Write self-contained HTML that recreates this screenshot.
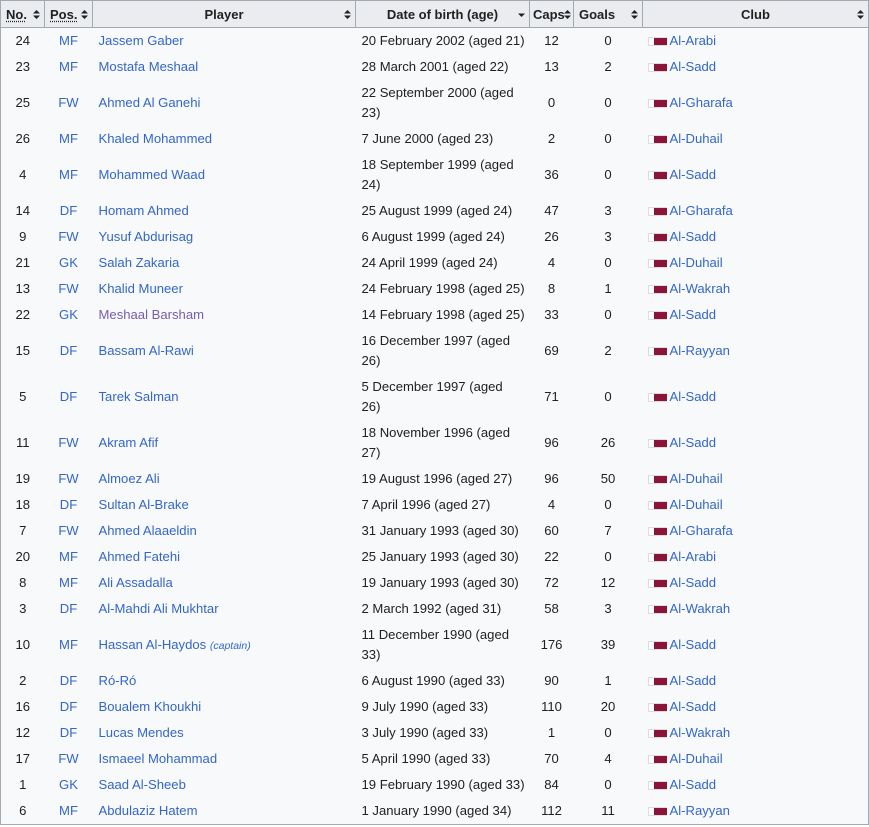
<!DOCTYPE html>
<html><head><meta charset="utf-8"><style>
body{margin:0;background:#fff;font-family:"Liberation Sans",Arial,sans-serif;font-size:13.1px;color:#202122}
table{border-collapse:collapse;table-layout:fixed;width:869px;background:#f8f9fa;border-left:1px solid #a2a9b1;border-bottom:1px solid #a2a9b1;border-right:1px solid #a2a9b1}
th{background:#eaecf0;border:1px solid #a2a9b1;height:26px;padding:0 4px;font-weight:bold;position:relative;text-align:center;white-space:nowrap;font-size:13px}
th svg{position:absolute;right:4px;top:9px}
td{padding:3px 6px;line-height:20px;height:20px;vertical-align:middle;white-space:nowrap;overflow:hidden}
td.c{text-align:center;padding:3px 2px}
a{color:#3366cc;text-decoration:none}
a.v{color:#795cb2}
abbr{text-decoration:underline dotted;text-underline-offset:2px}
.f{display:inline-block;width:19px;height:9px;vertical-align:-1px;margin-right:3px;box-sizing:border-box;border:1px solid #dcdcdc;border-right:0;background:linear-gradient(90deg,#fff 0 5px,#8a1538 5px)}
td.cl{padding-left:5px}
small{font-size:10.5px;font-style:italic;color:#3366cc}
</style></head><body>
<table>
<colgroup><col style="width:44px"><col style="width:48px"><col style="width:263px"><col style="width:174px"><col style="width:44px"><col style="width:69px"><col></colgroup>
<tr><th style="text-align:left;padding-left:5px"><abbr>No.</abbr><svg width="7" height="9"><path d="M0 3.5L3.5 0 7 3.5zM0 5.5L3.5 9 7 5.5z" fill="#202122"/></svg></th><th style="text-align:left;padding-left:5px"><abbr>Pos.</abbr><svg width="7" height="9"><path d="M0 3.5L3.5 0 7 3.5zM0 5.5L3.5 9 7 5.5z" fill="#202122"/></svg></th><th>Player<svg width="7" height="9"><path d="M0 3.5L3.5 0 7 3.5zM0 5.5L3.5 9 7 5.5z" fill="#202122"/></svg></th><th>Date of birth (age)<svg width="7" height="9"><path d="M0 3.5L3.5 7 7 3.5z" fill="#202122"/></svg></th><th style="text-align:left;padding-left:3px">Caps<svg width="7" height="9" style="right:2px"><path d="M0 3.5L3.5 0 7 3.5zM0 5.5L3.5 9 7 5.5z" fill="#202122"/></svg></th><th style="text-align:left;padding-left:5px">Goals<svg width="7" height="9"><path d="M0 3.5L3.5 0 7 3.5zM0 5.5L3.5 9 7 5.5z" fill="#202122"/></svg></th><th>Club<svg width="7" height="9"><path d="M0 3.5L3.5 0 7 3.5zM0 5.5L3.5 9 7 5.5z" fill="#202122"/></svg></th></tr>
<tr><td class="c">24</td><td class="c"><a>MF</a></td><td><a>Jassem Gaber</a></td><td>20 February 2002 (aged 21)</td><td class="c">12</td><td class="c">0</td><td class="cl"><span class="f"></span><a>Al-Arabi</a></td></tr>
<tr><td class="c">23</td><td class="c"><a>MF</a></td><td><a>Mostafa Meshaal</a></td><td>28 March 2001 (aged 22)</td><td class="c">13</td><td class="c">2</td><td class="cl"><span class="f"></span><a>Al-Sadd</a></td></tr>
<tr><td class="c">25</td><td class="c"><a>FW</a></td><td><a>Ahmed Al Ganehi</a></td><td>22 September 2000 (aged<br>23)</td><td class="c">0</td><td class="c">0</td><td class="cl"><span class="f"></span><a>Al-Gharafa</a></td></tr>
<tr><td class="c">26</td><td class="c"><a>MF</a></td><td><a>Khaled Mohammed</a></td><td>7 June 2000 (aged 23)</td><td class="c">2</td><td class="c">0</td><td class="cl"><span class="f"></span><a>Al-Duhail</a></td></tr>
<tr><td class="c">4</td><td class="c"><a>MF</a></td><td><a>Mohammed Waad</a></td><td>18 September 1999 (aged<br>24)</td><td class="c">36</td><td class="c">0</td><td class="cl"><span class="f"></span><a>Al-Sadd</a></td></tr>
<tr><td class="c">14</td><td class="c"><a>DF</a></td><td><a>Homam Ahmed</a></td><td>25 August 1999 (aged 24)</td><td class="c">47</td><td class="c">3</td><td class="cl"><span class="f"></span><a>Al-Gharafa</a></td></tr>
<tr><td class="c">9</td><td class="c"><a>FW</a></td><td><a>Yusuf Abdurisag</a></td><td>6 August 1999 (aged 24)</td><td class="c">26</td><td class="c">3</td><td class="cl"><span class="f"></span><a>Al-Sadd</a></td></tr>
<tr><td class="c">21</td><td class="c"><a>GK</a></td><td><a>Salah Zakaria</a></td><td>24 April 1999 (aged 24)</td><td class="c">4</td><td class="c">0</td><td class="cl"><span class="f"></span><a>Al-Duhail</a></td></tr>
<tr><td class="c">13</td><td class="c"><a>FW</a></td><td><a>Khalid Muneer</a></td><td>24 February 1998 (aged 25)</td><td class="c">8</td><td class="c">1</td><td class="cl"><span class="f"></span><a>Al-Wakrah</a></td></tr>
<tr><td class="c">22</td><td class="c"><a>GK</a></td><td><a class="v">Meshaal Barsham</a></td><td>14 February 1998 (aged 25)</td><td class="c">33</td><td class="c">0</td><td class="cl"><span class="f"></span><a>Al-Sadd</a></td></tr>
<tr><td class="c">15</td><td class="c"><a>DF</a></td><td><a>Bassam Al-Rawi</a></td><td>16 December 1997 (aged<br>26)</td><td class="c">69</td><td class="c">2</td><td class="cl"><span class="f"></span><a>Al-Rayyan</a></td></tr>
<tr><td class="c">5</td><td class="c"><a>DF</a></td><td><a>Tarek Salman</a></td><td>5 December 1997 (aged<br>26)</td><td class="c">71</td><td class="c">0</td><td class="cl"><span class="f"></span><a>Al-Sadd</a></td></tr>
<tr><td class="c">11</td><td class="c"><a>FW</a></td><td><a>Akram Afif</a></td><td>18 November 1996 (aged<br>27)</td><td class="c">96</td><td class="c">26</td><td class="cl"><span class="f"></span><a>Al-Sadd</a></td></tr>
<tr><td class="c">19</td><td class="c"><a>FW</a></td><td><a>Almoez Ali</a></td><td>19 August 1996 (aged 27)</td><td class="c">96</td><td class="c">50</td><td class="cl"><span class="f"></span><a>Al-Duhail</a></td></tr>
<tr><td class="c">18</td><td class="c"><a>DF</a></td><td><a>Sultan Al-Brake</a></td><td>7 April 1996 (aged 27)</td><td class="c">4</td><td class="c">0</td><td class="cl"><span class="f"></span><a>Al-Duhail</a></td></tr>
<tr><td class="c">7</td><td class="c"><a>FW</a></td><td><a>Ahmed Alaaeldin</a></td><td>31 January 1993 (aged 30)</td><td class="c">60</td><td class="c">7</td><td class="cl"><span class="f"></span><a>Al-Gharafa</a></td></tr>
<tr><td class="c">20</td><td class="c"><a>MF</a></td><td><a>Ahmed Fatehi</a></td><td>25 January 1993 (aged 30)</td><td class="c">22</td><td class="c">0</td><td class="cl"><span class="f"></span><a>Al-Arabi</a></td></tr>
<tr><td class="c">8</td><td class="c"><a>MF</a></td><td><a>Ali Assadalla</a></td><td>19 January 1993 (aged 30)</td><td class="c">72</td><td class="c">12</td><td class="cl"><span class="f"></span><a>Al-Sadd</a></td></tr>
<tr><td class="c">3</td><td class="c"><a>DF</a></td><td><a>Al-Mahdi Ali Mukhtar</a></td><td>2 March 1992 (aged 31)</td><td class="c">58</td><td class="c">3</td><td class="cl"><span class="f"></span><a>Al-Wakrah</a></td></tr>
<tr><td class="c">10</td><td class="c"><a>MF</a></td><td><a>Hassan Al-Haydos</a> <small>(captain)</small></td><td>11 December 1990 (aged<br>33)</td><td class="c">176</td><td class="c">39</td><td class="cl"><span class="f"></span><a>Al-Sadd</a></td></tr>
<tr><td class="c">2</td><td class="c"><a>DF</a></td><td><a>Ró-Ró</a></td><td>6 August 1990 (aged 33)</td><td class="c">90</td><td class="c">1</td><td class="cl"><span class="f"></span><a>Al-Sadd</a></td></tr>
<tr><td class="c">16</td><td class="c"><a>DF</a></td><td><a>Boualem Khoukhi</a></td><td>9 July 1990 (aged 33)</td><td class="c">110</td><td class="c">20</td><td class="cl"><span class="f"></span><a>Al-Sadd</a></td></tr>
<tr><td class="c">12</td><td class="c"><a>DF</a></td><td><a>Lucas Mendes</a></td><td>3 July 1990 (aged 33)</td><td class="c">1</td><td class="c">0</td><td class="cl"><span class="f"></span><a>Al-Wakrah</a></td></tr>
<tr><td class="c">17</td><td class="c"><a>FW</a></td><td><a>Ismaeel Mohammad</a></td><td>5 April 1990 (aged 33)</td><td class="c">70</td><td class="c">4</td><td class="cl"><span class="f"></span><a>Al-Duhail</a></td></tr>
<tr><td class="c">1</td><td class="c"><a>GK</a></td><td><a>Saad Al-Sheeb</a></td><td>19 February 1990 (aged 33)</td><td class="c">84</td><td class="c">0</td><td class="cl"><span class="f"></span><a>Al-Sadd</a></td></tr>
<tr><td class="c">6</td><td class="c"><a>MF</a></td><td><a>Abdulaziz Hatem</a></td><td>1 January 1990 (aged 34)</td><td class="c">112</td><td class="c">11</td><td class="cl"><span class="f"></span><a>Al-Rayyan</a></td></tr>
</table>
</body></html>
